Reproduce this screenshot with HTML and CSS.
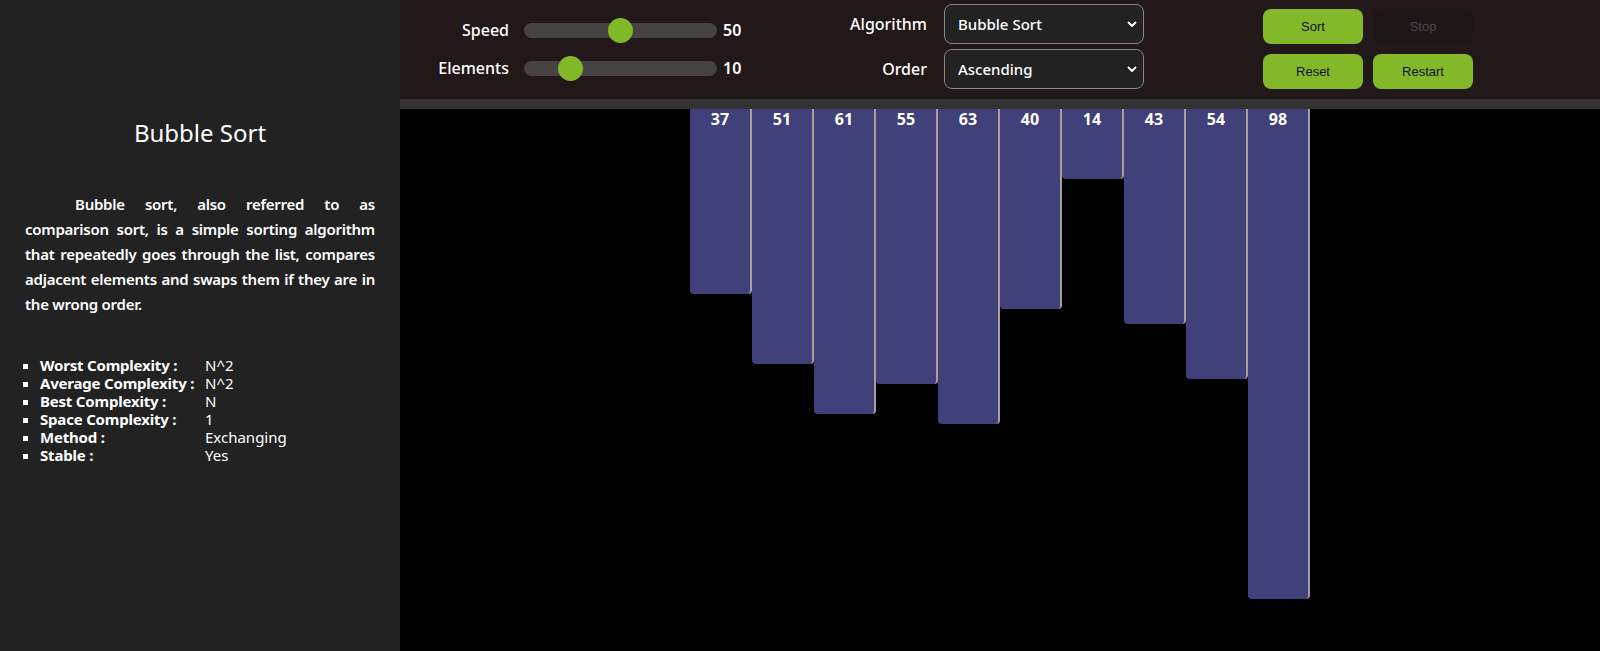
FILE: index.html
```html
<!DOCTYPE html>
<html lang="en">
<head>
<meta charset="utf-8">
<title>Sorting Visualizer</title>
<link rel="stylesheet" href="styles.css">
</head>
<body>
<div class="app">
  <aside class="sidebar">
    <h2 class="algo-title">Bubble Sort</h2>
    <p class="algo-desc">Bubble sort, also referred to as comparison sort, is a simple sorting algorithm that repeatedly goes through the list, compares adjacent elements and swaps them if they are in the wrong order.</p>
    <ul class="facts">
      <li><span class="fact-label">Worst Complexity :</span><span class="fact-value">N^2</span></li>
      <li><span class="fact-label">Average Complexity :</span><span class="fact-value">N^2</span></li>
      <li><span class="fact-label">Best Complexity :</span><span class="fact-value">N</span></li>
      <li><span class="fact-label">Space Complexity :</span><span class="fact-value">1</span></li>
      <li><span class="fact-label">Method :</span><span class="fact-value">Exchanging</span></li>
      <li><span class="fact-label">Stable :</span><span class="fact-value">Yes</span></li>
    </ul>
  </aside>
  <main class="main">
    <header class="toolbar">
      <div class="sliders">
        <label class="ctl-label" for="speed">Speed</label>
        <input class="range" id="speed" type="range" min="0" max="100" value="50">
        <span class="range-value">50</span>
        <label class="ctl-label" for="elements">Elements</label>
        <input class="range" id="elements" type="range" min="0" max="50" value="10">
        <span class="range-value">10</span>
      </div>
      <div class="selects">
        <label class="ctl-label" for="algo">Algorithm</label>
        <div class="select-wrap">
          <select class="select" id="algo">
            <option>Bubble Sort</option>
            <option>Selection Sort</option>
            <option>Insertion Sort</option>
            <option>Merge Sort</option>
            <option>Quick Sort</option>
          </select>
          <svg class="chev" width="10" height="7" viewBox="0 0 10 7"><path d="M1.5 1.5 L5 5 L8.5 1.5" fill="none" stroke="#fff" stroke-width="1.8" stroke-linecap="round" stroke-linejoin="round"/></svg>
        </div>
        <label class="ctl-label" for="order">Order</label>
        <div class="select-wrap">
          <select class="select" id="order">
            <option>Ascending</option>
            <option>Descending</option>
          </select>
          <svg class="chev" width="10" height="7" viewBox="0 0 10 7"><path d="M1.5 1.5 L5 5 L8.5 1.5" fill="none" stroke="#fff" stroke-width="1.8" stroke-linecap="round" stroke-linejoin="round"/></svg>
        </div>
      </div>
      <div class="buttons">
        <button class="btn">Sort</button>
        <button class="btn btn-disabled" disabled>Stop</button>
        <button class="btn">Reset</button>
        <button class="btn">Restart</button>
      </div>
    </header>
    <section class="chart">
      <div class="bar" style="height:185px"><span class="bar-num">37</span></div>
      <div class="bar" style="height:255px"><span class="bar-num">51</span></div>
      <div class="bar" style="height:305px"><span class="bar-num">61</span></div>
      <div class="bar" style="height:275px"><span class="bar-num">55</span></div>
      <div class="bar" style="height:315px"><span class="bar-num">63</span></div>
      <div class="bar" style="height:200px"><span class="bar-num">40</span></div>
      <div class="bar" style="height:70px"><span class="bar-num">14</span></div>
      <div class="bar" style="height:215px"><span class="bar-num">43</span></div>
      <div class="bar" style="height:270px"><span class="bar-num">54</span></div>
      <div class="bar" style="height:490px"><span class="bar-num">98</span></div>
    </section>
  </main>
</div>
</body>
</html>
```

FILE: styles.css
```css
* { box-sizing: border-box; }

html, body {
  margin: 0;
  padding: 0;
  height: 100%;
  background: #000;
}

body {
  font-family: "Noto Sans", "Open Sans", sans-serif;
  color: #fff;
  overflow: hidden;
}

.app {
  display: flex;
  height: 651px;
}

/* Sidebar */
.sidebar {
  width: 400px;
  flex: none;
  background: #222222;
  padding: 0 25px;
}

.algo-title {
  margin: 115px 0 0;
  font-size: 24px;
  font-weight: 400;
  text-align: center;
  line-height: 36px;
}

.algo-desc {
  margin: 41px 0 0;
  font-size: 15px;
  font-weight: 600;
  letter-spacing: -0.25px;
  line-height: 25px;
  text-align: justify;
  text-indent: 50px;
}

.facts {
  margin: 39px 0 0;
  padding-left: 15px;
  list-style: square;
  font-size: 15px;
  line-height: 18px;
}

.fact-label {
  display: inline-block;
  width: 165px;
  font-weight: 700;
  letter-spacing: -0.2px;
}

.fact-value {
  font-weight: 400;
}

/* Main area */
.main {
  flex: 1;
  display: flex;
  flex-direction: column;
  min-width: 0;
}

.toolbar {
  height: 109px;
  flex: none;
  background: #221819;
  border-bottom: 10px solid #333333;
  display: flex;
  align-items: flex-start;
  padding-left: 15px;
}

.ctl-label {
  font-size: 16px;
  font-weight: 500;
  text-align: right;
  color: #fff;
}

.sliders {
  display: grid;
  grid-template-columns: 94px 193px 30px;
  grid-auto-rows: 38px;
  column-gap: 15px;
  align-items: center;
  margin-top: 11px;
}

.range-value {
  font-size: 16px;
  font-weight: 600;
  margin-left: -9px;
}

.range {
  -webkit-appearance: none;
  appearance: none;
  width: 193px;
  height: 25px;
  margin: 0;
  background: transparent;
}

.range::-webkit-slider-runnable-track {
  height: 15px;
  border-radius: 8px;
  background: #474343;
}

.range::-webkit-slider-thumb {
  -webkit-appearance: none;
  appearance: none;
  width: 25px;
  height: 25px;
  border-radius: 50%;
  background: #80b827;
  margin-top: -5px;
  border: none;
}

.selects {
  display: grid;
  grid-template-columns: 90px 200px;
  grid-auto-rows: 40px;
  column-gap: 17px;
  row-gap: 5px;
  align-items: center;
  margin-top: 4px;
  margin-left: 75px;
}

.select-wrap {
  position: relative;
  height: 40px;
}

.select {
  -webkit-appearance: none;
  appearance: none;
  width: 200px;
  height: 40px;
  background: #222222;
  color: #fff;
  border: 1px solid #8a8586;
  border-radius: 8px;
  padding: 0 28px 0 13px;
  font-family: "Noto Sans", "Open Sans", sans-serif;
  font-size: 15px;
  font-weight: 500;
}

.chev {
  position: absolute;
  right: 7px;
  top: 17px;
  pointer-events: none;
}

.buttons {
  display: grid;
  grid-template-columns: 100px 100px;
  grid-auto-rows: 35px;
  gap: 10px;
  margin-top: 9px;
  margin-left: 119px;
}

.btn {
  border: none;
  border-radius: 8px;
  background: #83b829;
  color: #111;
  font-family: "Liberation Sans", Arial, sans-serif;
  font-size: 13px;
  padding: 0;
  cursor: pointer;
}

.btn-disabled {
  background: #1d1617;
  color: #4d4849;
  cursor: default;
}

/* Chart */
.chart {
  flex: 1;
  background: #000;
  display: flex;
  justify-content: center;
  align-items: flex-start;
}

.bar {
  width: 62px;
  background: #40407a;
  border-right: 2px solid #a89c9d;
  border-radius: 0 0 4px 4px;
  text-align: center;
}

.bar-num {
  display: block;
  font-size: 16px;
  font-weight: 700;
  line-height: 18px;
  padding-top: 1px;
  color: #fff;
}
```
